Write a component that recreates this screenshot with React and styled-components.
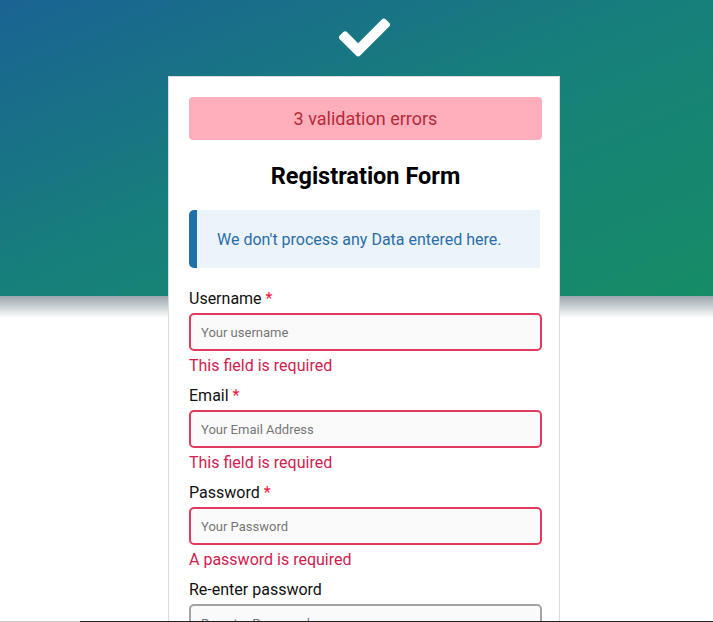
import React from "react";
import styled, { createGlobalStyle } from "styled-components";
import { FaCheck } from "react-icons/fa";

const Global = createGlobalStyle`
  html, body { margin: 0; padding: 0; overflow: hidden; background: #fff; }
  body { font-family: Roboto, "Noto Sans", Arial, sans-serif; color: #111; }
  * { box-sizing: border-box; }
`;

const Page = styled.div`
  width: 713px;
  min-height: 622px;
`;

const Header = styled.header`
  position: relative;
  height: 296px;
  background: linear-gradient(to bottom right, #1a6393 0%, #17807a 50%, #168c66 100%);
  display: flex;
  justify-content: center;
  padding: 12px 0 0 15px;
  color: #fff;
  &::after {
    content: "";
    position: absolute;
    left: 0;
    right: 0;
    top: 100%;
    height: 22px;
    background: linear-gradient(#9ba6ae, rgba(255, 255, 255, 0));
  }
`;

const Main = styled.main`
  position: relative;
  z-index: 1;
  display: flex;
  justify-content: center;
  padding-left: 15px;
  margin-top: -220px;
`;

const Card = styled.div`
  width: 392px;
  background: #fff;
  border: 1px solid #dcdcdc;
  padding: 20px 17px 40px 20px;
`;

const Alert = styled.div`
  height: 43px;
  border-radius: 4px;
  background: #ffafbb;
  color: #b52a3a;
  font-size: 18px;
  display: flex;
  align-items: center;
  justify-content: center;
`;

const Title = styled.h1`
  margin: 23px 0 0;
  font-size: 23.5px;
  line-height: 26px;
  font-weight: 700;
  text-align: center;
  color: #000;
`;

const Info = styled.div`
  margin: 21px 2px 0 0;
  height: 58px;
  background: #ecf4fb;
  border-left: 8px solid #1f6fa8;
  border-radius: 5px 0 0 5px;
  padding-left: 20px;
  display: flex;
  align-items: center;
  font-size: 16px;
  color: #2b6ea7;
`;

const Fields = styled.div`
  margin-top: 21px;
`;

const Field = styled.div`
  display: flex;
  flex-direction: column;
  margin-bottom: 11px;
`;

const Label = styled.label`
  font-size: 16px;
  line-height: 19px;
  color: #111;
  margin-bottom: 5px;
`;

const Star = styled.span`
  color: #f0143c;
`;

const Input = styled.input`
  height: 38px;
  width: 100%;
  border: 2px solid ${(p) => (p.$error ? "#e13a5c" : "#a3a3a3")};
  border-radius: 5px;
  background: #fafafa;
  padding: 0 10px;
  font-family: Roboto, Arial, sans-serif;
  font-size: 13px;
  color: #333;
  outline: none;
  &::placeholder { color: #777; }
`;

const ErrorText = styled.div`
  margin-top: 5px;
  font-size: 16px;
  line-height: 19px;
  color: #d0204f;
`;

const BottomLine = styled.div`
  position: fixed;
  left: 0;
  right: 0;
  bottom: 0;
  height: 1px;
  background: linear-gradient(to right, #c8c8c8 0, #c8c8c8 80px, #222 80px);
  z-index: 5;
`;

const fields = [
  { label: "Username", req: true, ph: "Your username", err: "This field is required" },
  { label: "Email", req: true, ph: "Your Email Address", err: "This field is required" },
  { label: "Password", req: true, ph: "Your Password", err: "A password is required", type: "password" },
  { label: "Re-enter password", req: false, ph: "Re-enter Password", type: "password" },
];

export default function App() {
  return (
    <Page>
      <Global />
      <Header>
        <FaCheck size={51} />
      </Header>
      <Main>
        <Card>
          <Alert>3 validation errors</Alert>
          <Title>Registration Form</Title>
          <Info>We don't process any Data entered here.</Info>
          <Fields>
            {fields.map((f) => (
              <Field key={f.label}>
                <Label>
                  {f.label}
                  {f.req && <Star> *</Star>}
                </Label>
                <Input placeholder={f.ph} $error={!!f.err} type={f.type || "text"} />
                {f.err && <ErrorText>{f.err}</ErrorText>}
              </Field>
            ))}
          </Fields>
        </Card>
      </Main>
      <BottomLine />
    </Page>
  );
}
